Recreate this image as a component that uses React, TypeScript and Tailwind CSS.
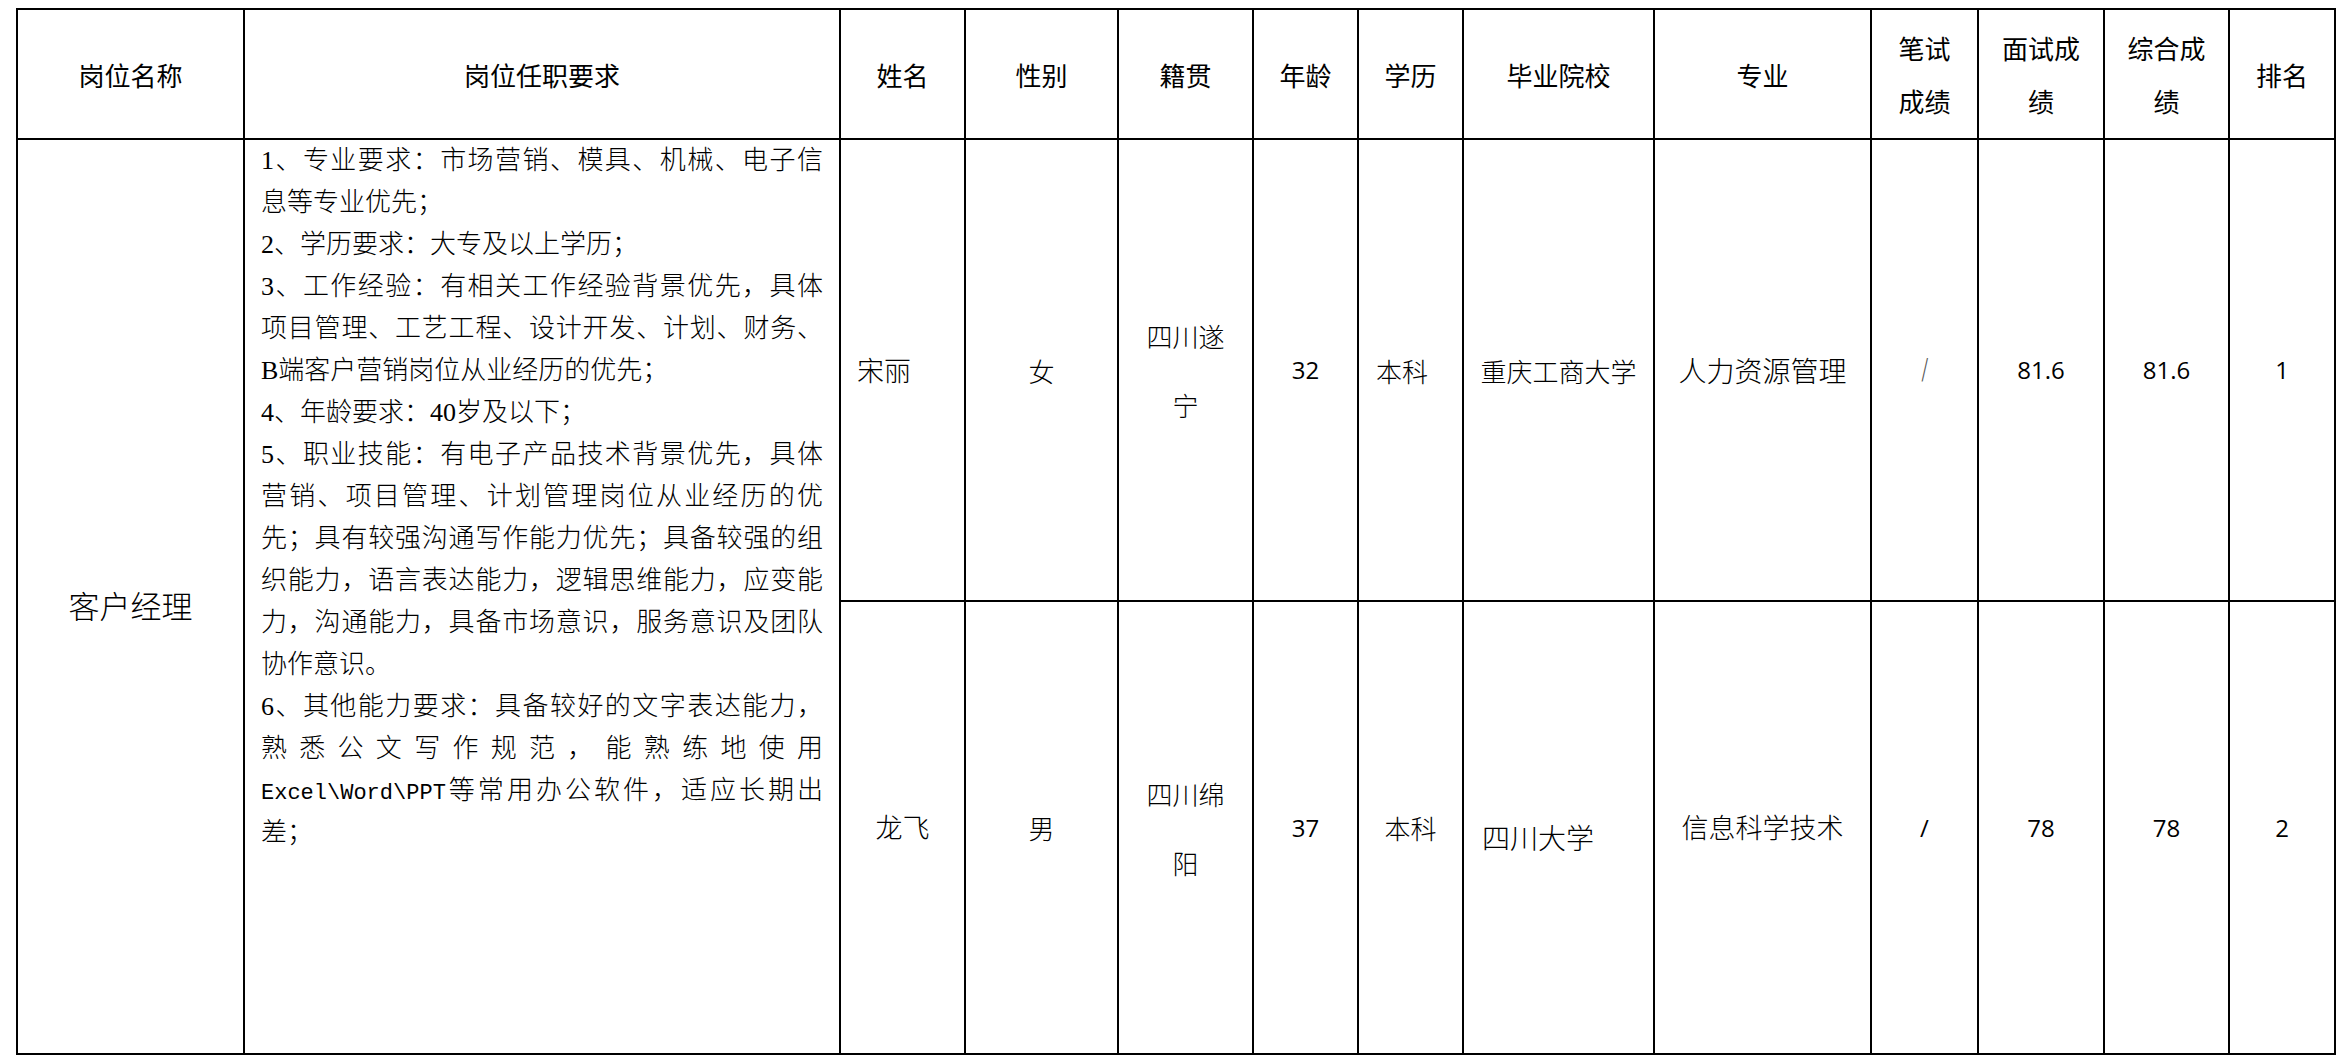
import React from "react";

const cjk = "font-['Noto_Sans_CJK_SC',sans-serif]";
const body = "font-['Liberation_Serif','Noto_Sans_CJK_SC',sans-serif]";
const num = "font-['Open_Sans','Liberation_Sans',sans-serif] text-[24px] leading-none text-black";

type Line = { t: React.ReactNode; j: boolean };

const lines: Line[] = [
  { t: "1、专业要求：市场营销、模具、机械、电子信", j: true },
  { t: "息等专业优先；", j: false },
  { t: "2、学历要求：大专及以上学历；", j: false },
  { t: "3、工作经验：有相关工作经验背景优先，具体", j: true },
  { t: "项目管理、工艺工程、设计开发、计划、财务、", j: true },
  { t: "B端客户营销岗位从业经历的优先；", j: false },
  { t: "4、年龄要求：40岁及以下；", j: false },
  { t: "5、职业技能：有电子产品技术背景优先，具体", j: true },
  { t: "营销、项目管理、计划管理岗位从业经历的优", j: true },
  { t: "先；具有较强沟通写作能力优先；具备较强的组", j: true },
  { t: "织能力，语言表达能力，逻辑思维能力，应变能", j: true },
  { t: "力，沟通能力，具备市场意识，服务意识及团队", j: true },
  { t: "协作意识。", j: false },
  { t: "6、其他能力要求：具备较好的文字表达能力，", j: true },
  { t: "熟悉公文写作规范，能熟练地使用", j: true },
  {
    t: (
      <>
        <span className="font-['Liberation_Mono',monospace] text-[22px] font-normal">{"Excel\\Word\\PPT"}</span>
        等常用办公软件，适应长期出
      </>
    ),
    j: true,
  },
  { t: "差；", j: false },
];

function H({ children }: { children: React.ReactNode }) {
  return (
    <div className={`bg-white flex items-center justify-center text-center text-[26px] leading-[53px] text-black ${cjk}`}>
      <div>{children}</div>
    </div>
  );
}

function C({
  children,
  className = "",
}: {
  children: React.ReactNode;
  className?: string;
}) {
  return <div className={`bg-white flex items-center ${className}`}>{children}</div>;
}

export default function App() {
  return (
    <div lang="zh-CN" className="min-h-screen w-full bg-white">
      <div className="pl-[16px] pt-[8px]">
        <div className="grid w-[2320px] gap-[2px] bg-black p-[2px] grid-cols-[225px_594px_123px_151px_133px_103px_103px_189px_215px_105px_124px_123px_104px] grid-rows-[128px_460px_451px]">
          {/* header */}
          <H>岗位名称</H>
          <H>岗位任职要求</H>
          <H>姓名</H>
          <H>性别</H>
          <H>籍贯</H>
          <H>年龄</H>
          <H>学历</H>
          <H>毕业院校</H>
          <H>专业</H>
          <H>
            笔试
            <br />
            成绩
          </H>
          <H>
            面试成
            <br />
            绩
          </H>
          <H>
            综合成
            <br />
            绩
          </H>
          <H>排名</H>

          {/* rowspan cells */}
          <div className={`row-span-2 bg-white flex items-center justify-center pt-[18px] text-[31px] font-light text-black ${cjk}`}>
            客户经理
          </div>
          <div className={`row-span-2 bg-white px-[16px] pt-0 text-[26px] font-light text-black ${body}`}>
            {lines.map((l, i) => (
              <div
                key={i}
                className={
                  l.j
                    ? "h-[42px] leading-[42px] text-justify [text-align-last:justify]"
                    : "h-[42px] leading-[42px] text-left"
                }
              >
                {l.t}
              </div>
            ))}
          </div>

          {/* row 1 */}
          <C className={`pl-[16px] text-[27px] font-light text-black ${cjk}`}>宋丽</C>
          <C className={`justify-center text-[26px] font-light text-black ${cjk}`}>女</C>
          <C className={`justify-center text-center text-[26px] leading-[69px] font-light text-black ${cjk}`}>
            <div>
              四川遂
              <br />宁
            </div>
          </C>
          <C className={`justify-center ${num}`}>32</C>
          <C className={`pl-[17px] text-[26px] font-light text-black ${cjk}`}>本科</C>
          <C className={`justify-center text-[26px] font-light text-black ${cjk}`}>重庆工商大学</C>
          <C className={`justify-center text-[28px] font-light text-black ${cjk}`}>人力资源管理</C>
          <C className="justify-center font-['DejaVu_Sans',sans-serif] text-[28px] font-light leading-none text-[#555555]">
            <span className="scale-x-75 inline-block">/</span>
          </C>
          <C className={`justify-center ${num}`}>81.6</C>
          <C className={`justify-center ${num}`}>81.6</C>
          <C className={`justify-center ${num}`}>1</C>

          {/* row 2 */}
          <C className={`justify-center text-[27px] font-light text-black ${cjk}`}>龙飞</C>
          <C className={`justify-center text-[26px] font-light text-black ${cjk}`}>男</C>
          <C className={`justify-center text-center text-[26px] leading-[69px] font-light text-black ${cjk}`}>
            <div>
              四川绵
              <br />阳
            </div>
          </C>
          <C className={`justify-center ${num}`}>37</C>
          <C className={`justify-center text-[26px] font-light text-black ${cjk}`}>本科</C>
          <C className={`pl-[18px] pt-[18px] text-[28px] font-light text-black ${cjk}`}>四川大学</C>
          <C className={`justify-center text-[27px] font-light text-black ${cjk}`}>信息科学技术</C>
          <C className={`justify-center ${num}`}>/</C>
          <C className={`justify-center ${num}`}>78</C>
          <C className={`justify-center ${num}`}>78</C>
          <C className={`justify-center ${num}`}>2</C>
        </div>
      </div>
    </div>
  );
}
